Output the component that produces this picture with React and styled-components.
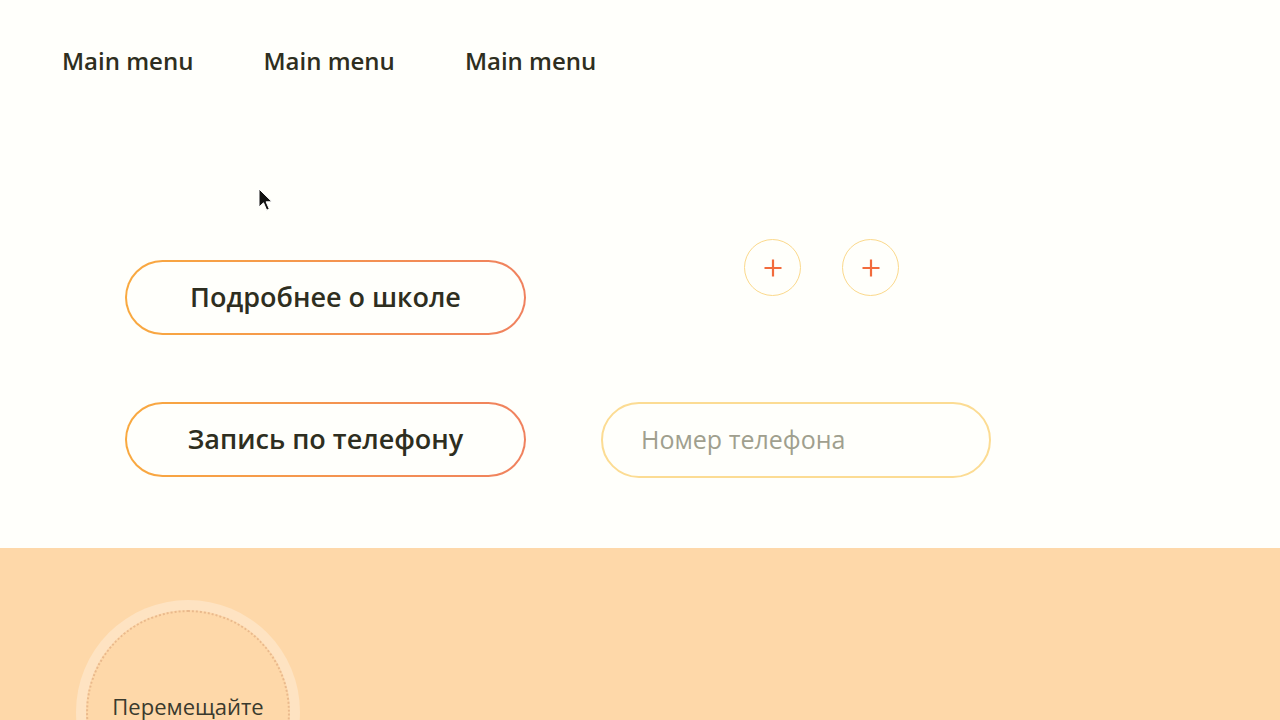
import { Component } from 'react';
import styled, { createGlobalStyle } from 'styled-components';

const GlobalStyle = createGlobalStyle`
  html, body {
    margin: 0;
    padding: 0;
    background: #fffffb;
    font-family: "Open Sans", "Noto Sans", sans-serif;
    color: #2e2e20;
  }
  * { box-sizing: border-box; }
`;

const Page = styled.div`
  width: 1280px;
  height: 720px;
  overflow: hidden;
  display: grid;
  grid-template-rows: 548px 1fr;
  position: relative;
`;

const Top = styled.section`
  display: grid;
  grid-template-rows: 124px auto;
  align-content: start;
  position: relative;
`;

const Nav = styled.nav`
  display: flex;
  gap: 70px;
  padding: 45px 0 0 62px;
`;

const NavItem = styled.a`
  font-size: 24px;
  font-weight: 600;
  line-height: 32px;
  color: #2e2e20;
  text-decoration: none;
`;

const Cursor = styled.svg`
  position: absolute;
  left: 258px;
  top: 188px;
`;

const Actions = styled.div`
  display: grid;
  grid-template-columns: 401px 390px;
  column-gap: 75px;
  row-gap: 67px;
  padding: 115px 0 0 125px;
  align-items: start;
  align-content: start;
`;

const Outline = styled.button`
  height: 75px;
  width: 401px;
  margin-top: ${p => p.offset || 0}px;
  border-radius: 38px;
  border: 2px solid transparent;
  background:
    linear-gradient(#fffffb, #fffffb) padding-box,
    linear-gradient(90deg, #f9a93f, #f0815e) border-box;
  font-family: "Open Sans", "Noto Sans", sans-serif;
  font-size: 27px;
  font-weight: 600;
  color: #2e2e20;
  padding: 0 0 3px;
  cursor: pointer;
`;

const Pluses = styled.div`
  display: flex;
  gap: 41px;
  padding-left: 143px;
`;

const PlusButton = styled.button`
  width: 57px;
  height: 57px;
  border-radius: 50%;
  border: 1px solid #fbd98c;
  background: transparent;
  display: flex;
  align-items: center;
  justify-content: center;
  padding: 0;
`;

const PhoneInput = styled.input`
  height: 76px;
  width: 390px;
  border-radius: 38px;
  border: 2px solid #fcdc93;
  background: transparent;
  padding: 0 0 3px 38px;
  font-family: "Open Sans", "Noto Sans", sans-serif;
  font-size: 25px;
  color: #2e2e20;
  outline: none;
  &::placeholder { color: #a09f8e; }
`;

const Bottom = styled.section`
  background: #fed8a9;
  padding: 52px 0 0 76px;
`;

const Dropzone = styled.div`
  width: 224px;
  height: 224px;
  border-radius: 50%;
  background: #fee3c2;
  padding: 10px;
`;

const DropInner = styled.div`
  width: 100%;
  height: 100%;
  border-radius: 50%;
  background: #fed8a9;
  border: 2px dotted #eab98c;
  display: flex;
  justify-content: center;
  padding-top: 80px;
  font-size: 22px;
  line-height: 28px;
  color: #3a3a2e;
`;

const Plus = () => (
  <svg width="20" height="20" viewBox="0 0 20 20">
    <path d="M10 1.5v17M1.5 10h17" stroke="#f26b3c" strokeWidth="2.2" fill="none" />
  </svg>
);

class App extends Component {
  render() {
    return (
      <>
        <GlobalStyle />
        <Page>
          <Top>
            <Nav>
              <NavItem href="#">Main menu</NavItem>
              <NavItem href="#">Main menu</NavItem>
              <NavItem href="#">Main menu</NavItem>
            </Nav>
            <Actions>
              <Outline offset={21}>Подробнее о школе</Outline>
              <Pluses>
                <PlusButton><Plus /></PlusButton>
                <PlusButton><Plus /></PlusButton>
              </Pluses>
              <Outline>Запись по телефону</Outline>
              <PhoneInput placeholder="Номер телефона" />
            </Actions>
            <Cursor width="14" height="24" viewBox="0 0 14 24">
              <path d="M1 1v18l4.5-4.2 3.2 7.4 2.6-1.1-3.2-7.3H14z" fill="#111" stroke="#fff" strokeWidth="1" />
            </Cursor>
          </Top>
          <Bottom>
            <Dropzone>
              <DropInner>Перемещайте</DropInner>
            </Dropzone>
          </Bottom>
        </Page>
      </>
    );
  }
}

export default App;
